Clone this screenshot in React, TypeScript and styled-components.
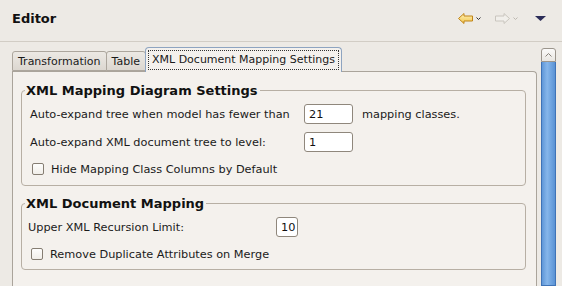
import React from "react"
import styled, { createGlobalStyle } from "styled-components"

const GlobalStyle = createGlobalStyle`
  html, body {
    margin: 0;
    padding: 0;
    background: #edeae5;
  }
  body {
    font-family: "DejaVu Sans", "Liberation Sans", sans-serif;
    font-size: 11px;
    color: #1a1a1a;
  }
`

const Page = styled.div`
  width: 562px;
  height: 286px;
  overflow: hidden;
  display: flex;
  flex-direction: column;
  background: #edeae5;
`

const Header = styled.header`
  flex: none;
  display: flex;
  align-items: center;
  padding: 0 16px 0 12px;
  border-bottom: 1px solid #d2cdc5;
  box-sizing: border-box;
  height: 42px;
`

const Title = styled.h1`
  margin: 0 0 5px;
  font-size: 13px;
  font-weight: bold;
  color: #111;
  flex: 1;
`

const Actions = styled.div`
  display: flex;
  align-items: center;
  margin-bottom: 5px;
`

const ToolButton = styled.span<{ $gap?: number }>`
  display: inline-flex;
  align-items: center;
  gap: 3px;
  margin-left: ${(p) => p.$gap ?? 0}px;
  svg {
    display: block;
  }
`

const Body = styled.div`
  flex: 1;
  display: flex;
  padding: 5px 6px 0 12px;
  min-height: 0;
`

const Main = styled.div`
  width: 525px;
  display: flex;
  flex-direction: column;
`

const TabStrip = styled.div`
  display: flex;
  align-items: flex-end;
  height: 24px;
  flex: none;
  position: relative;
  z-index: 1;
`

const Tab = styled.div<{ $active?: boolean }>`
  box-sizing: border-box;
  height: ${(p) => (p.$active ? 25 : 20)}px;
  margin-right: -1px;
  margin-bottom: ${(p) => (p.$active ? -1 : 0)}px;
  padding: ${(p) => (p.$active ? "2px 2px 4px" : "0 5px")};
  display: flex;
  align-items: ${(p) => (p.$active ? "flex-start" : "center")};
  border: 1px solid ${(p) => (p.$active ? "#8ea4c0" : "#aca69d")};
  border-bottom: ${(p) => (p.$active ? "none" : "1px solid #aca69d")};
  border-radius: ${(p) => (p.$active ? "4px 4px 0 0" : "3px 3px 0 0")};
  background: ${(p) =>
    p.$active ? "#f4f1ed" : "linear-gradient(#ece9e4, #dcd7d0)"};
  color: #1a1a1a;
  white-space: nowrap;
`

const FocusLabel = styled.span`
  border: 1px dotted #333;
  padding: 2px 3px 3px;
  line-height: 13px;
`

const Panel = styled.div`
  flex: 1;
  border: 1px solid #aaa49b;
  border-bottom: none;
  border-radius: 0 4px 0 0;
  background: #f4f1ed;
  padding: 11px 10px 0 8px;
  font-size: 11.3px;
`

const Group = styled.fieldset<{ $top?: number; $bottom: number }>`
  margin: ${(p) => p.$top ?? 0}px 0 0;
  border: 1px solid #b7afa4;
  border-radius: 4px;
  padding: 0 0 ${(p) => p.$bottom}px;
  min-width: 0;
`

const Legend = styled.legend`
  margin-left: 3px;
  padding: 0 2px 0 1px;
  font-size: 13px;
  font-weight: bold;
  line-height: 15px;
  color: #111;
`

const FieldGrid = styled.div<{ $label: number; $pad: number }>`
  display: grid;
  grid-template-columns: ${(p) => p.$label}px auto auto;
  justify-content: start;
  align-items: center;
  row-gap: 8px;
  margin-top: 6px;
  padding-left: ${(p) => p.$pad}px;
`

const Label = styled.span`
  white-space: nowrap;
`

const Trailing = styled.span`
  margin-left: 9px;
`

const TextInput = styled.div<{ $width: number }>`
  box-sizing: border-box;
  width: ${(p) => p.$width}px;
  height: 20px;
  border: 1px solid #8f877c;
  border-radius: 3px;
  background: #fff;
  padding: 0 4px;
  display: flex;
  align-items: center;
  color: #111;
`

const CheckRow = styled.label<{ $indent: number }>`
  grid-column: 1 / -1;
  display: flex;
  align-items: center;
  height: 18px;
  padding-left: ${(p) => p.$indent}px;
  gap: 7px;
`

const Box = styled.span`
  width: 12px;
  height: 12px;
  box-sizing: border-box;
  border: 1px solid #857d72;
  border-radius: 2px;
  background: linear-gradient(#fdfdfc, #f1eee9);
`

const ScrollBar = styled.div`
  width: 15px;
  margin-left: 4px;
  margin-top: 1px;
  display: flex;
  flex-direction: column;
  flex: none;
`

const ScrollButton = styled.div`
  height: 14px;
  box-sizing: border-box;
  border: 1px solid #9b958c;
  border-radius: 3px 3px 0 0;
  background: linear-gradient(#fbfaf9, #e9e6e1);
  display: flex;
  align-items: center;
  justify-content: center;
`

const Thumb = styled.div`
  flex: 1;
  box-sizing: border-box;
  border: 1px solid #3f73b6;
  border-top: none;
  background: linear-gradient(90deg, #5f97d8, #86b6ea 40%, #6fa4e0 70%, #5a92d4);
`

const BackArrow = () => (
  <svg width="15" height="11" viewBox="0 0 15 11">
    <defs>
      <linearGradient id="bk" x1="0" y1="0" x2="0" y2="1">
        <stop offset="0" stopColor="#fff2b8" />
        <stop offset="1" stopColor="#f2c54a" />
      </linearGradient>
    </defs>
    <polygon
      points="0.5,5.5 6,0.5 6,3 14.5,3 14.5,8 6,8 6,10.5"
      fill="url(#bk)"
      stroke="#c08418"
      strokeLinejoin="round"
    />
  </svg>
)

const ForwardArrow = () => (
  <svg width="15" height="11" viewBox="0 0 15 11">
    <polygon
      points="14.5,5.5 9,0.5 9,3 0.5,3 0.5,8 9,8 9,10.5"
      fill="#f1efeb"
      stroke="#c9c5be"
      strokeLinejoin="round"
    />
  </svg>
)

const Chevron = ({ color }: { color: string }) => (
  <svg width="5" height="3" viewBox="0 0 5 3">
    <polyline points="0.5,0.5 2.5,2.5 4.5,0.5" fill="none" stroke={color} strokeWidth="1" />
  </svg>
)

const MenuTriangle = () => (
  <svg width="11" height="5" viewBox="0 0 11 5">
    <polygon points="0,0 11,0 5.5,5" fill="#2c2d58" />
  </svg>
)

const UpChevron = () => (
  <svg width="7" height="4" viewBox="0 0 7 4">
    <polyline points="0.5,3.5 3.5,0.5 6.5,3.5" fill="none" stroke="#8a847b" />
  </svg>
)

export default function App() {
  return (
    <Page>
      <GlobalStyle />
      <Header>
        <Title>Editor</Title>
        <Actions>
          <ToolButton>
            <BackArrow />
            <Chevron color="#333" />
          </ToolButton>
          <ToolButton $gap={14}>
            <ForwardArrow />
            <Chevron color="#bdb8b0" />
          </ToolButton>
          <ToolButton $gap={17}>
            <MenuTriangle />
          </ToolButton>
        </Actions>
      </Header>
      <Body>
        <Main>
          <TabStrip>
            <Tab>Transformation</Tab>
            <Tab>Table</Tab>
            <Tab $active>
              <FocusLabel>XML Document Mapping Settings</FocusLabel>
            </Tab>
          </TabStrip>
          <Panel>
            <Group $bottom={7}>
              <Legend>XML Mapping Diagram Settings</Legend>
              <FieldGrid $label={274} $pad={8}>
                <Label>Auto-expand tree when model has fewer than</Label>
                <TextInput $width={49}>21</TextInput>
                <Trailing>mapping classes.</Trailing>
                <Label>Auto-expand XML document tree to level:</Label>
                <TextInput $width={49}>1</TextInput>
                <span />
                <CheckRow $indent={2}>
                  <Box />
                  Hide Mapping Class Columns by Default
                </CheckRow>
              </FieldGrid>
            </Group>
            <Group $top={10} $bottom={6}>
              <Legend>XML Document Mapping</Legend>
              <FieldGrid $label={248} $pad={6}>
                <Label>Upper XML Recursion Limit:</Label>
                <TextInput $width={22}>10</TextInput>
                <span />
                <CheckRow $indent={3}>
                  <Box />
                  Remove Duplicate Attributes on Merge
                </CheckRow>
              </FieldGrid>
            </Group>
          </Panel>
        </Main>
        <ScrollBar>
          <ScrollButton>
            <UpChevron />
          </ScrollButton>
          <Thumb />
        </ScrollBar>
      </Body>
    </Page>
  )
}
